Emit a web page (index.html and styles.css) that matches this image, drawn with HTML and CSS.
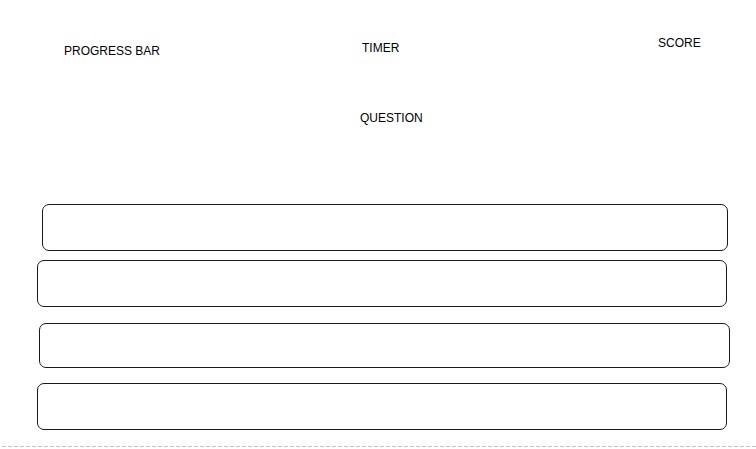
FILE: index.html
```html
<!DOCTYPE html>
<html>
<head>
<meta charset="utf-8">
<link rel="stylesheet" href="styles.css">
</head>
<body>
<div class="page">
  <div class="top">
    <div class="label progress">PROGRESS BAR</div>
    <div class="label timer">TIMER</div>
    <div class="label score">SCORE</div>
  </div>
  <div class="label question">QUESTION</div>
  <div class="answers">
    <div class="answer a1"></div>
    <div class="answer a2"></div>
    <div class="answer a3"></div>
    <div class="answer a4"></div>
  </div>
  <div class="rule"></div>
</div>
</body>
</html>
```
FILE: styles.css
```css
html, body {
  margin: 0;
  padding: 0;
  background: #ffffff;
}
.page {
  width: 756px;
  height: 449px;
  overflow: hidden;
  font-family: "Liberation Sans", Arial, sans-serif;
  color: #000;
}
.label {
  font-size: 12px;
  line-height: 14px;
  white-space: nowrap;
}
.top {
  display: grid;
  grid-template-columns: 362px 296px 1fr;
  align-items: start;
  height: 58px;
}
.progress {
  margin-top: 44px;
  padding-left: 64px;
}
.timer {
  margin-top: 41px;
}
.score {
  margin-top: 36px;
}
.question {
  margin-top: 53px;
  padding-left: 360px;
}
.answers {
  display: flex;
  flex-direction: column;
  margin-top: 79px;
}
.answer {
  box-sizing: border-box;
  border: 1px solid #1a1a1a;
  border-radius: 7px;
  height: 47px;
}
.a1 {
  margin-left: 42px;
  width: 686px;
}
.a2 {
  margin-top: 9px;
  margin-left: 37px;
  width: 690px;
}
.a3 {
  margin-top: 16px;
  margin-left: 39px;
  width: 691px;
  height: 45px;
}
.a4 {
  margin-top: 15px;
  margin-left: 37px;
  width: 690px;
}
.rule {
  margin-top: 16px;
  margin-left: 2px;
  height: 1px;
  background: repeating-linear-gradient(to right, #c4c4c4 0 4px, transparent 4px 6px);
}
```
